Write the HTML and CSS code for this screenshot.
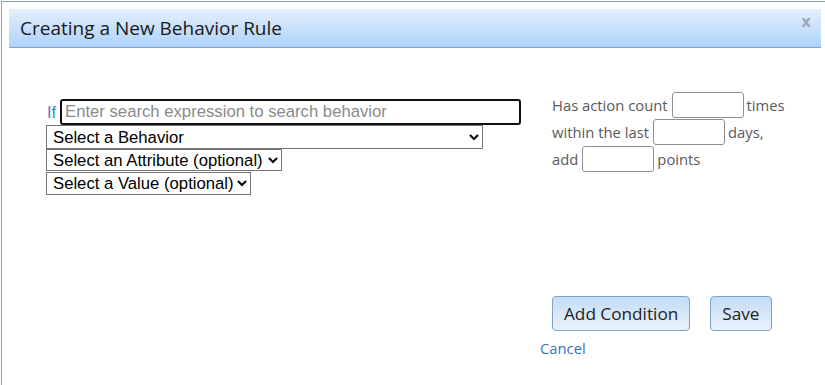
FILE: index.html
```html
<!DOCTYPE html>
<html lang="en">
<head>
  <meta charset="UTF-8">
  <title>Creating a New Behavior Rule</title>
  <link rel="stylesheet" href="styles.css">
</head>
<body>
  <div class="dialog">
    <div class="dialog-header">
      <span class="dialog-title">Creating a New Behavior Rule</span>
      <a class="dialog-close" href="#">x</a>
    </div>

    <div class="dialog-body">
      <div class="rule-left">
        <div class="search-row">
          <span class="if-label">If</span>
          <input class="search-input" type="text" placeholder="Enter search expression to search behavior">
        </div>
        <select class="behavior-select">
          <option>Select a Behavior</option>
        </select>
        <select class="attr-select">
          <option>Select an Attribute (optional)</option>
        </select>
        <select class="value-select">
          <option>Select a Value (optional)</option>
        </select>
      </div>

      <div class="rule-right">
        <div class="count-row">Has action count <input class="small-input" type="text"> times</div>
        <div class="count-row">within the last <input class="small-input" type="text"> days,</div>
        <div class="count-row">add <input class="small-input" type="text"> points</div>

        <div class="actions">
          <button class="btn">Add Condition</button>
          <button class="btn">Save</button>
        </div>
        <a class="cancel-link" href="#">Cancel</a>
      </div>
    </div>
  </div>
</body>
</html>
```

FILE: styles.css
```css
* {
  box-sizing: border-box;
}

body {
  margin: 0;
  padding: 1px 0 0 1px;
  font-family: 'Open Sans', sans-serif;
  background: #fff;
  overflow: hidden;
}

.dialog {
  width: 828px;
  height: 400px;
  border: 1px solid #7fa3c7;
  padding: 7px;
  background: #fff;
}

.dialog-header {
  position: relative;
  height: 39px;
  padding-left: 11px;
  display: flex;
  align-items: center;
  background: linear-gradient(to bottom, #e4effc, #aed3fa);
  border-bottom: 1px solid #7fa3c7;
}

.dialog-title {
  font-size: 19px;
  color: #1a1a1a;
}

.dialog-close {
  position: absolute;
  right: 10px;
  top: 4px;
  font-family: 'DejaVu Sans', sans-serif;
  font-weight: bold;
  font-size: 15px;
  color: #9ba9b7;
  text-decoration: none;
}

.dialog-body {
  display: flex;
  padding: 43px 0 0 37px;
}

.rule-left {
  width: 506px;
  padding-top: 8px;
  display: flex;
  flex-direction: column;
  align-items: flex-start;
  font-family: 'Liberation Sans', Arial, sans-serif;
}

.search-row {
  display: flex;
  align-items: center;
}

.if-label {
  color: #4a7fc1;
  font-size: 16.5px;
  width: 14px;
  padding-left: 1px;
}

.search-input {
  width: 461px;
  height: 26px;
  border: 2px solid #101010;
  border-radius: 3px;
  padding: 0 3px;
  font-family: 'Liberation Sans', Arial, sans-serif;
  font-size: 16.7px;
  outline: none;
}

.search-input::placeholder {
  color: #8a8a8a;
}

.rule-left select {
  font-family: 'Liberation Sans', Arial, sans-serif;
  font-size: 16.7px;
  color: #000;
  background: #fff;
  border: 1px solid #767676;
  padding: 0 0 0 2px;
}

.behavior-select {
  width: 437px;
  height: 24px;
}

.attr-select {
  width: 236px;
  height: 22px;
}

.value-select {
  width: 205px;
  height: 23px;
  margin-top: 1px;
}

.rule-right {
  font-size: 14.8px;
  color: #595959;
}

.count-row {
  height: 27px;
  display: flex;
  align-items: center;
  white-space: nowrap;
}

.small-input {
  width: 72px;
  height: 26px;
  margin: 0 3px 0 4px;
  border: 1px solid #8f8f8f;
  border-radius: 3px;
}

.actions {
  display: flex;
  gap: 20px;
  margin-top: 124px;
}

.btn {
  height: 35px;
  padding: 0 11px;
  font-family: 'Open Sans', sans-serif;
  font-size: 17.2px;
  color: #222;
  background: linear-gradient(to bottom, #c3dcf6, #e9f2fc);
  border: 1px solid #7fa3c7;
  border-radius: 4px;
}

.cancel-link {
  display: block;
  margin: 7px 0 0 -12px;
  font-size: 14.8px;
  color: #3e70c0;
  text-decoration: none;
}
```
